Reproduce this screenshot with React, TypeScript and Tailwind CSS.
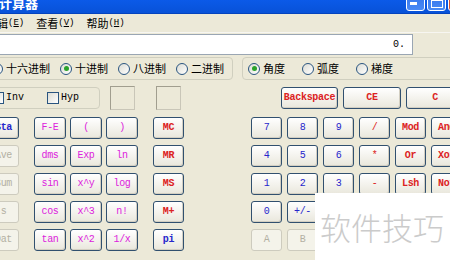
import cx from "clsx";

type Tone = "blue" | "mag" | "red" | "off";

const tones: Record<Tone, string> = {
  blue: "text-[#2626cc] border-[#31506f] bg-linear-to-b from-white to-[#e9e7dc] shadow-[inset_-1px_-1px_0_#d3cfc2]",
  mag: "text-[#dc22dc] border-[#31506f] bg-linear-to-b from-white to-[#e9e7dc] shadow-[inset_-1px_-1px_0_#d3cfc2]",
  red: "text-[#dc2222] border-[#31506f] bg-linear-to-b from-white to-[#e9e7dc] shadow-[inset_-1px_-1px_0_#d3cfc2]",
  off: "text-[#b3b0a2] border-[#cdcbbe] bg-[#f4f3ea]",
};

type K = [string, Tone, boolean?];

const Key = ({ k, w = "w-[31px]" }: { k: K; w?: string }) => (
  <div
    className={cx(
      "h-[22px] shrink-0 rounded-[3px] border flex items-center justify-center font-['Liberation_Mono',monospace] text-[10px] tracking-[-0.3px] leading-none",
      w,
      tones[k[1]],
      k[2] && "font-bold"
    )}
  >
    {k[0]}
  </div>
);

const leftCol: K[] = [
  ["Sta", "blue", true],
  ["Ave", "off"],
  ["Sum", "off"],
  ["s", "off"],
  ["Dat", "off"],
];

const funcs: K[] = [
  ["F-E", "mag"], ["(", "mag"], [")", "mag"],
  ["dms", "mag"], ["Exp", "mag"], ["ln", "mag"],
  ["sin", "mag"], ["x^y", "mag"], ["log", "mag"],
  ["cos", "mag"], ["x^3", "mag"], ["n!", "mag"],
  ["tan", "mag"], ["x^2", "mag"], ["1/x", "mag"],
];

const mem: K[] = [
  ["MC", "red", true],
  ["MR", "red", true],
  ["MS", "red", true],
  ["M+", "red", true],
  ["pi", "blue", true],
];

const nums: K[] = [
  ["7", "blue"], ["8", "blue"], ["9", "blue"], ["/", "red"], ["Mod", "red", true], ["And", "red", true],
  ["4", "blue"], ["5", "blue"], ["6", "blue"], ["*", "red"], ["Or", "red", true], ["Xor", "red", true],
  ["1", "blue"], ["2", "blue"], ["3", "blue"], ["-", "red"], ["Lsh", "red", true], ["Not", "red", true],
  ["0", "blue"], ["+/-", "blue"], [".", "blue"], ["+", "red"], ["=", "red"], ["Int", "red", true],
  ["A", "off"], ["B", "off"], ["C", "off"], ["D", "off"], ["E", "off"], ["F", "off"],
];

const cjk = "font-['Noto_Sans_CJK_SC',sans-serif]";
const mono = "font-['Liberation_Mono','Noto_Sans_CJK_SC',monospace]";

const Radio = ({ label, on = false }: { label: string; on?: boolean }) => (
  <div className="flex items-center gap-[3px] shrink-0">
    <span className="w-[12px] h-[12px] rounded-full border border-[#2a5580] bg-linear-to-br from-[#dcdcd4] to-white flex items-center justify-center">
      {on && <span className="w-[5px] h-[5px] rounded-full bg-[#2aa22a]" />}
    </span>
    <span className={cx(cjk, "text-[11px] leading-none text-black")}>{label}</span>
  </div>
);

const Check = ({ label }: { label: string }) => (
  <div className="flex items-center gap-[2px] shrink-0">
    <span className="w-[12px] h-[12px] border border-[#2a5580] bg-linear-to-br from-[#dcdcd4] to-white" />
    <span className={cx(mono, "text-[10px] leading-none text-black")}>{label}</span>
  </div>
);

const MenuItem = ({ name, key_ }: { name: string; key_: string }) => (
  <span className="flex items-center leading-none text-black shrink-0">
    <span className={cx(cjk, "text-[11px]")}>{name}</span>
    <span className={cx(mono, "text-[9px]")}>
      (<span className="underline">{key_}</span>)
    </span>
  </span>
);

const Sunken = ({ ml }: { ml: string }) => (
  <div
    className={cx(
      "w-[25px] h-[24px] shrink-0 border border-t-[#a19e8f] border-l-[#a19e8f] border-r-[#c9c6b8] border-b-[#c9c6b8]",
      ml
    )}
  />
);

export default function App() {
  return (
    <div className="w-[450px] h-[260px] overflow-hidden relative bg-[#ece9d8]">
      {/* title bar */}
      <div className="h-[14px] bg-linear-to-b from-[#0b5ae8] to-[#0852d8] border-b border-[#0443bd] flex items-end overflow-hidden">
        <span className={cx(cjk, "text-white font-bold text-[13px] leading-[13px] -ml-[1px] mb-[4px] shrink-0")}>
          计算器
        </span>
        <div className="ml-auto flex items-end gap-[2px] mb-[2px] -mr-[17px] shrink-0">
          <div className="w-[19px] h-[21px] rounded-[3px] border border-white bg-linear-to-b from-[#2f6fe8] to-[#4a8af5] flex items-end pl-[3px] pb-[5px]">
            <span className="w-[7px] h-[3px] bg-white" />
          </div>
          <div className="w-[19px] h-[21px] rounded-[3px] border border-white bg-linear-to-b from-[#2f6fe8] to-[#4a8af5] flex items-end justify-center pb-[2px]">
            <span className="w-[12px] h-[10px] border border-white border-t-[3px]" />
          </div>
          <div className="w-[19px] h-[21px] rounded-[3px] border border-white bg-[#d9542f]" />
        </div>
      </div>

      {/* menu */}
      <div className="h-[19px] flex items-center gap-[12px] -ml-[14px] border-b border-[#f7f6f1]">
        <MenuItem name="编辑" key_="E" />
        <MenuItem name="查看" key_="V" />
        <MenuItem name="帮助" key_="H" />
      </div>

      {/* display */}
      <div className="mt-[1px] -ml-[4px] w-[417px] h-[21px] bg-white border border-[#9aa6b3] flex items-center justify-end pr-[7px]">
        <span className={cx(mono, "text-[10px] text-black leading-none")}>0.</span>
      </div>

      {/* radix / angle */}
      <div className="mt-[2px] flex gap-[9px] -ml-[16px]">
        <div className="w-[249px] h-[23px] shrink-0 rounded-[4px] border border-[#d0cfbf] flex items-center pl-[6px] gap-[10px]">
          <Radio label="十六进制" />
          <Radio label="十进制" on />
          <Radio label="八进制" />
          <Radio label="二进制" />
        </div>
        <div className="w-[240px] h-[23px] shrink-0 rounded-[4px] border border-[#d0cfbf] flex items-center pl-[5px] gap-[17px]">
          <Radio label="角度" on />
          <Radio label="弧度" />
          <Radio label="梯度" />
        </div>
      </div>

      {/* inv / hyp row */}
      <div className="mt-[6px] flex items-center -ml-[16px] h-[24px]">
        <div className="w-[116px] h-[22px] shrink-0 rounded-[4px] border border-[#d0cfbf] flex items-center pl-[7px] gap-[23px]">
          <Check label="Inv" />
          <Check label="Hyp" />
        </div>
        <Sunken ml="ml-[10px]" />
        <Sunken ml="ml-[21px]" />
        <div className="ml-[100px] flex gap-[5px] shrink-0">
          <Key k={["Backspace", "red", true]} w="w-[57px]" />
          <Key k={["CE", "red", true]} w="w-[58px]" />
          <Key k={["C", "red", true]} w="w-[58px]" />
        </div>
      </div>

      {/* keypad */}
      <div className="mt-[7px] flex -ml-[12px]">
        <div className="shrink-0 grid grid-cols-1 gap-y-[6px]">
          {leftCol.map((k) => (
            <Key key={k[0]} k={k} />
          ))}
        </div>
        <div className="shrink-0 ml-[15px] grid grid-cols-3 gap-x-[4px] gap-y-[6px]">
          {funcs.map((k) => (
            <Key key={k[0]} k={k} w="w-[32px]" />
          ))}
        </div>
        <div className="shrink-0 ml-[15px] grid grid-cols-1 gap-y-[6px]">
          {mem.map((k) => (
            <Key key={k[0]} k={k} />
          ))}
        </div>
        <div className="shrink-0 ml-[67px] grid grid-cols-6 gap-x-[5px] gap-y-[6px]">
          {nums.map((k, i) => (
            <Key key={i} k={k} />
          ))}
        </div>
      </div>

      {/* watermark */}
      <div className="absolute left-[315px] top-[193px] w-[135px] h-[67px] bg-white flex items-center pl-[5px]">
        <span className={cx(cjk, "text-[31px] font-light leading-none text-[#cbcbcb] whitespace-nowrap")}>
          软件技巧
        </span>
      </div>
    </div>
  );
}
